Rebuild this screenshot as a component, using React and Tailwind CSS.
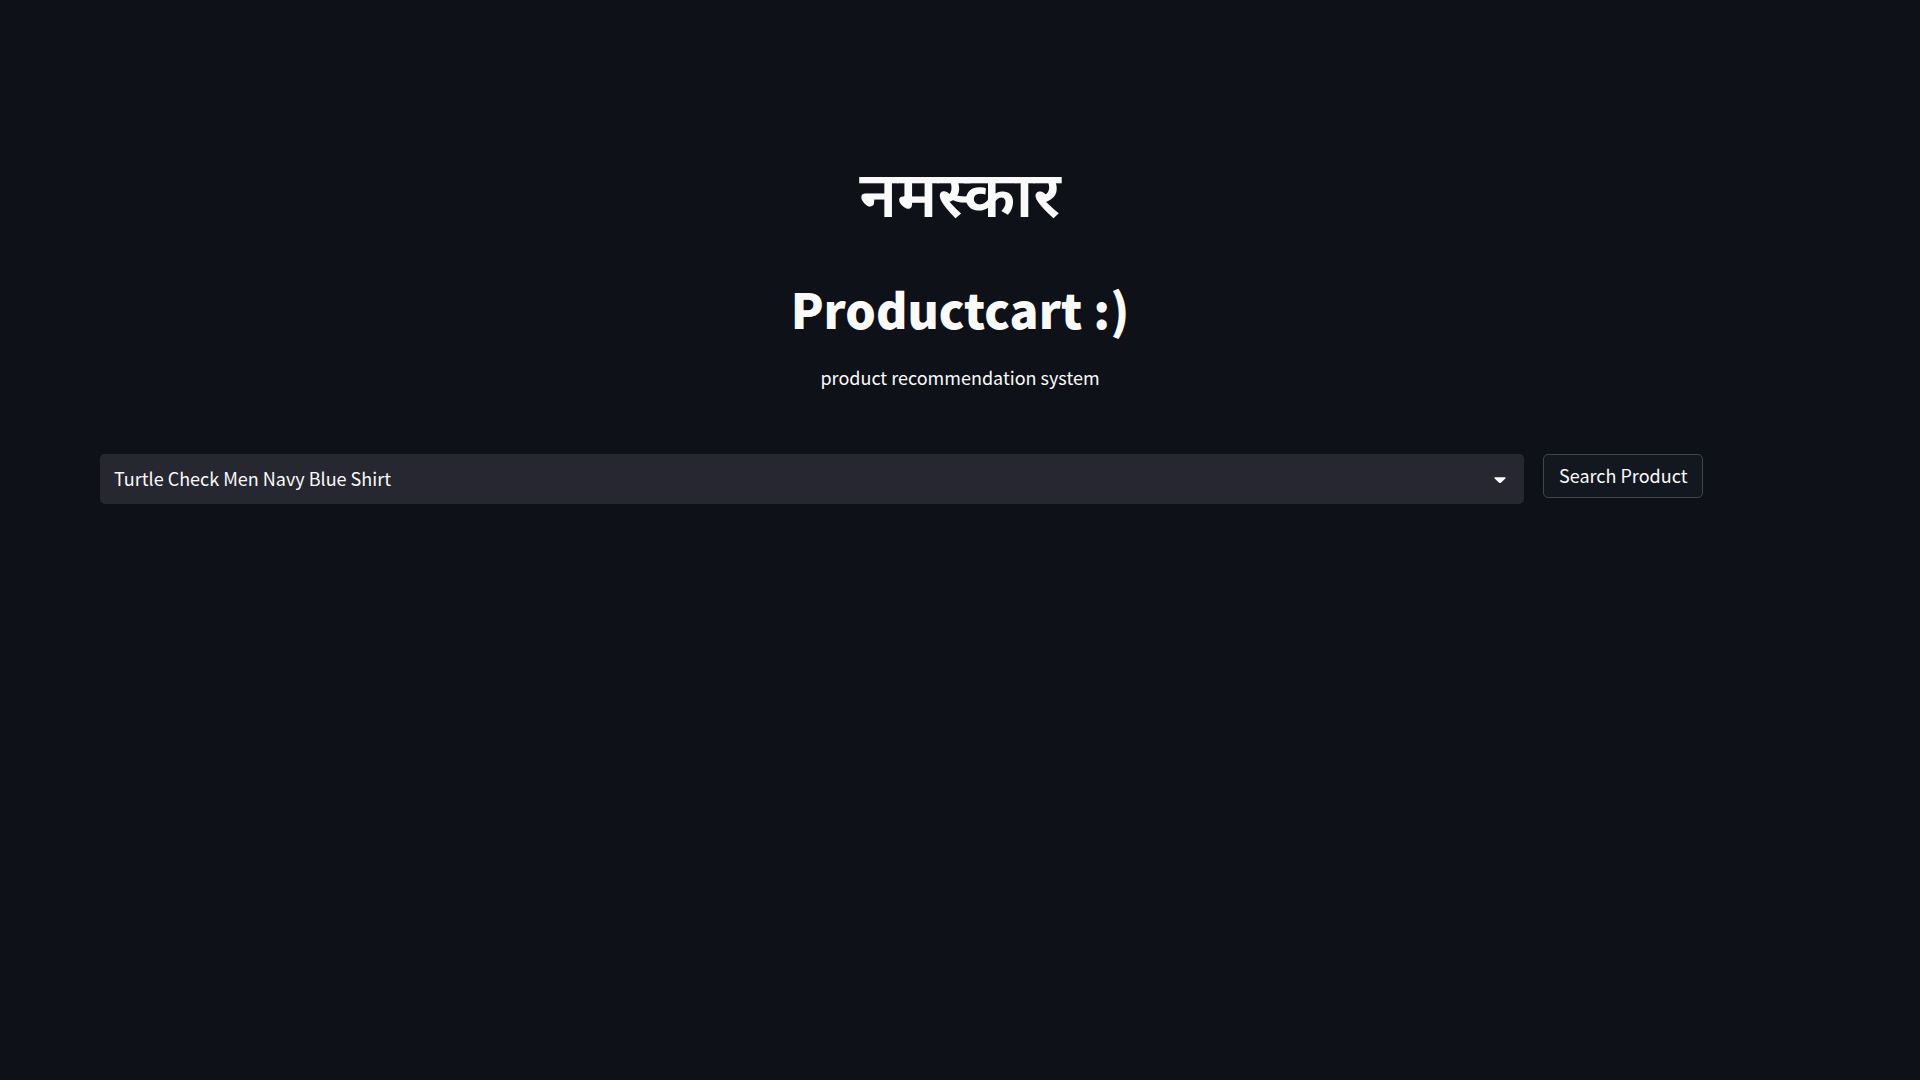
import React from "react";

export default function App() {
  return (
    <main className="min-h-screen bg-[#0e1117] px-[100px] pt-[160px] font-['Noto_Sans_CJK_SC','Noto_Sans',sans-serif] text-[18px] text-[#fafafa]">
      <header className="text-center">
        <h1 className="font-['Noto_Sans',sans-serif] text-[64px] leading-[66px] font-semibold">नमस्कार</h1>
        <h1 className="mt-[49px] text-[48px] leading-[66px] font-black">Productcart :)</h1>
        <p className="mt-[20px] leading-[32px]">product recommendation system</p>
      </header>
      <form className="mt-[61px] grid grid-cols-[minmax(0,1424fr)_minmax(0,277fr)] items-start gap-[19px]">
        <div className="relative">
          <select aria-label="Product" className="h-[50px] w-full appearance-none rounded-[5px] bg-[#262730] pr-12 pb-[2px] pl-[14px] text-[#fafafa]">
            <option>Turtle Check Men Navy Blue Shirt</option>
          </select>
          <svg viewBox="0 0 20 20" aria-hidden="true" className="pointer-events-none absolute top-4 right-[14px] size-5" fill="#fafafa">
            <path d="M5 7.3h10c.7 0 .9.8.4 1.3l-4.5 4.1c-.5.5-1.3.5-1.8 0L4.6 8.6c-.5-.5-.3-1.3.4-1.3z" />
          </svg>
        </div>
        <button type="button" className="h-[44px] justify-self-start rounded-[5px] border border-[#41444c] bg-[#131720] px-[15px] pb-[2px] whitespace-nowrap">Search Product</button>
      </form>
    </main>
  );
}
